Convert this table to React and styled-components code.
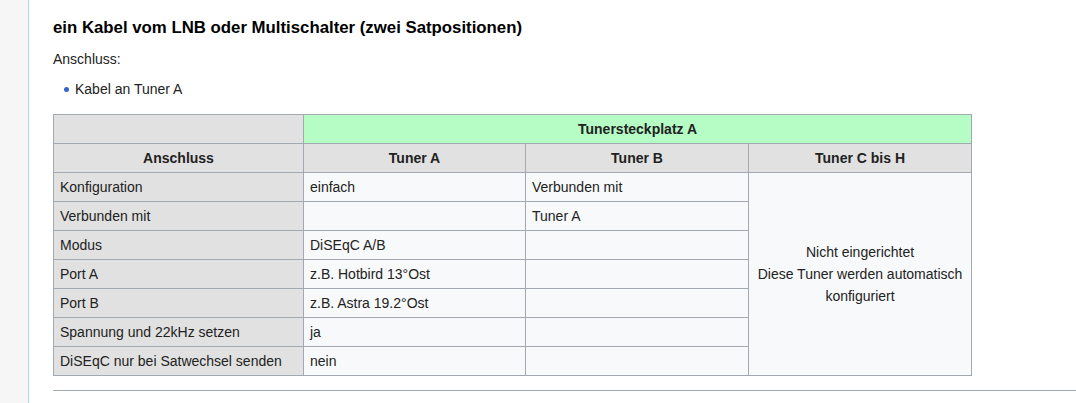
import React from 'react'
import styled, { createGlobalStyle } from 'styled-components'

const GlobalStyle = createGlobalStyle`
  html, body {
    margin: 0;
    padding: 0;
    background: #ffffff;
  }
  body {
    font-family: "Liberation Sans", Arial, sans-serif;
    color: #222222;
  }
`

const Page = styled.div`
  display: flex;
  height: 403px;
  overflow: hidden;
`

const Sidebar = styled.div`
  width: 28px;
  flex-shrink: 0;
  background: #f6f6f6;
  border-right: 1px solid #a7d7f9;
`

const Content = styled.div`
  flex: 1;
  padding: 17px 0 0 24px;
  font-size: 14px;
  line-height: 22px;
`

const Heading = styled.h3`
  margin: 0;
  font-size: 16.8px;
  line-height: 22px;
  font-weight: bold;
  color: #000;
`

const Para = styled.p`
  margin: 9px 0 0;
`

const List = styled.ul`
  margin: 8px 0 0;
  padding: 0 0 0 22px;
  list-style: none;
`

const Item = styled.li`
  position: relative;
  &::before {
    content: '';
    position: absolute;
    left: -11px;
    top: 9px;
    width: 5px;
    height: 5px;
    border-radius: 50%;
    background: #36c;
  }
`

const Table = styled.table`
  margin-top: 14px;
  width: 918px;
  table-layout: fixed;
  border-collapse: collapse;
  background: #f8f9fa;
  font-size: 14px;
  line-height: 18px;
  color: #222;
`

const Cell = styled.td`
  border: 1px solid #a2a9b1;
  height: 29px;
  box-sizing: border-box;
  padding: 0 6px;
  text-align: ${p => (p.$center ? 'center' : 'left')};
  background: ${p => (p.$shade ? '#e1e1e1' : 'transparent')};
  line-height: ${p => (p.$center ? '22px' : '18px')};
`

const Head = styled.th`
  border: 1px solid #a2a9b1;
  height: 29px;
  box-sizing: border-box;
  padding: 0 6px;
  text-align: center;
  font-weight: bold;
  background: ${p => (p.$green ? '#b5fcc5' : '#e1e1e1')};
`

const Rule = styled.hr`
  margin: 14px 0 0;
  border: 0;
  border-top: 1px solid #a2a9b1;
  height: 0;
`

const rows = [
  ['Konfiguration', 'einfach', 'Verbunden mit'],
  ['Verbunden mit', '', 'Tuner A'],
  ['Modus', 'DiSEqC A/B', ''],
  ['Port A', 'z.B. Hotbird 13°Ost', ''],
  ['Port B', 'z.B. Astra 19.2°Ost', ''],
  ['Spannung und 22kHz setzen', 'ja', ''],
  ['DiSEqC nur bei Satwechsel senden', 'nein', ''],
]

export default function App() {
  return (
    <>
      <GlobalStyle />
      <Page>
        <Sidebar />
        <Content>
          <Heading>ein Kabel vom LNB oder Multischalter (zwei Satpositionen)</Heading>
          <Para>Anschluss:</Para>
          <List>
            <Item>Kabel an Tuner A</Item>
          </List>
          <Table>
            <colgroup>
              <col style={{ width: 250 }} />
              <col style={{ width: 222 }} />
              <col style={{ width: 223 }} />
              <col style={{ width: 223 }} />
            </colgroup>
            <thead>
              <tr>
                <Head />
                <Head $green colSpan={3}>Tunersteckplatz A</Head>
              </tr>
              <tr>
                <Head>Anschluss</Head>
                <Head>Tuner A</Head>
                <Head>Tuner B</Head>
                <Head>Tuner C bis H</Head>
              </tr>
            </thead>
            <tbody>
              {rows.map((r, i) => (
                <tr key={r[0]}>
                  <Cell $shade>{r[0]}</Cell>
                  <Cell>{r[1]}</Cell>
                  <Cell>{r[2]}</Cell>
                  {i === 0 && (
                    <Cell $center rowSpan={7}>
                      Nicht eingerichtet<br />
                      Diese Tuner werden automatisch<br />
                      konfiguriert
                    </Cell>
                  )}
                </tr>
              ))}
            </tbody>
          </Table>
          <Rule />
        </Content>
      </Page>
    </>
  )
}
